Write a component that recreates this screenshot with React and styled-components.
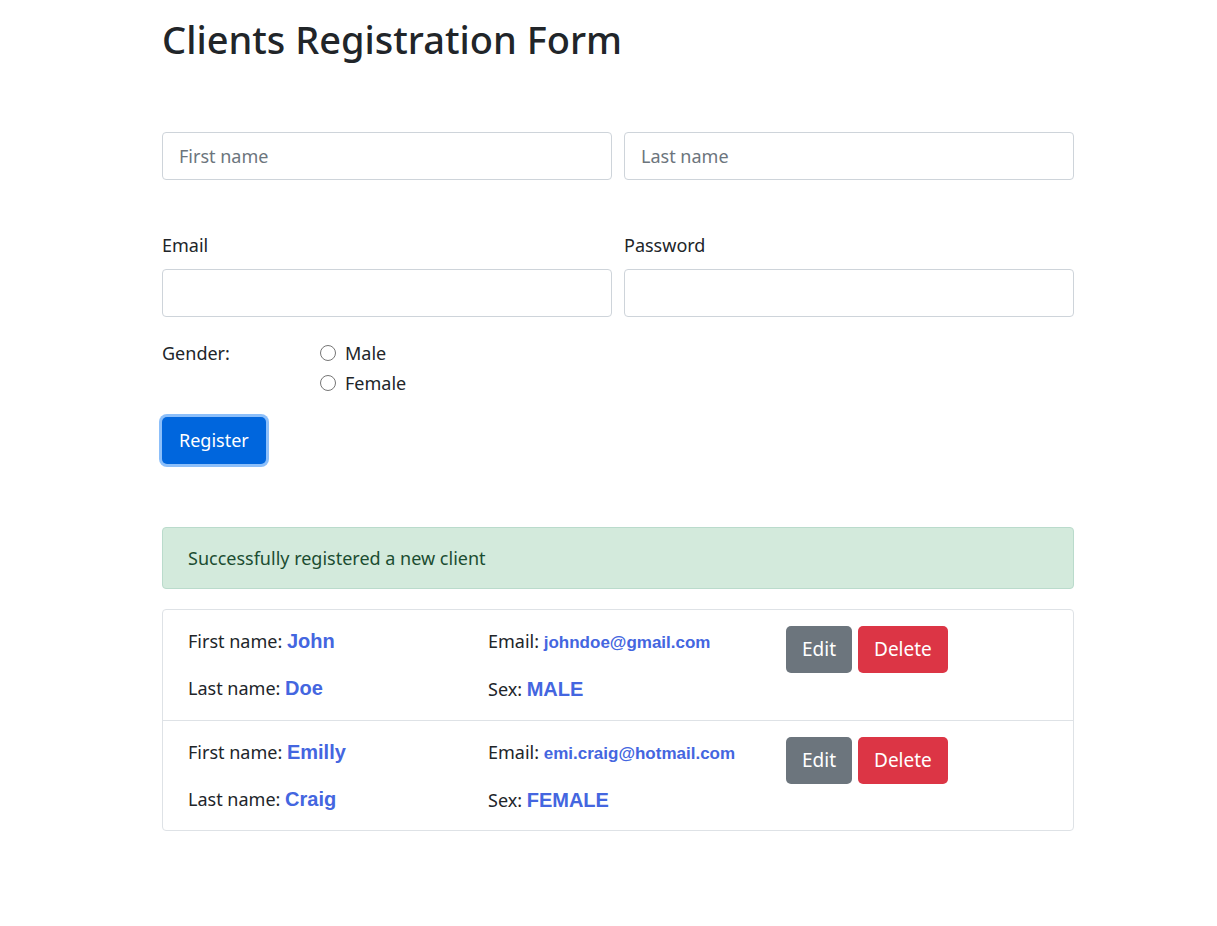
import React from 'react'
import styled, { createGlobalStyle } from 'styled-components'

const GlobalStyle = createGlobalStyle`
  body {
    margin: 0;
    background: #fff;
    color: #212529;
    font-family: "Noto Sans", "Open Sans", sans-serif;
    font-size: 18px;
  }
`

const Page = styled.div`
  width: 912px;
  margin-left: 162px;
  padding-top: 17px;
`

const Title = styled.h1`
  margin: 0 0 69px;
  font-size: 38px;
  font-weight: 500;
  line-height: 1.2;
`

const Row = styled.div`
  display: grid;
  grid-template-columns: 1fr 1fr;
  gap: 12px;
  margin-bottom: ${(p) => p.$mb || 0}px;
`

const Field = styled.div`
  display: flex;
  flex-direction: column;
`

const Label = styled.label`
  font-size: 18px;
  line-height: 24px;
  margin-bottom: 12px;
`

const Input = styled.input`
  box-sizing: border-box;
  height: 48px;
  padding: 0 16px;
  font-family: inherit;
  font-size: 18px;
  color: #212529;
  border: 1px solid #ced4da;
  border-radius: 4px;
  outline: none;

  &::placeholder {
    color: #6c757d;
  }
`

const GenderRow = styled.div`
  display: flex;
  margin-top: 21px;
`

const GenderLabel = styled.div`
  width: 158px;
  line-height: 30px;
`

const Radios = styled.div`
  display: flex;
  flex-direction: column;
`

const RadioLabel = styled.label`
  display: flex;
  align-items: center;
  gap: 9px;
  line-height: 30px;
`

const Radio = styled.input`
  appearance: none;
  width: 16px;
  height: 16px;
  margin: 0;
  border: 1px solid #767676;
  border-radius: 50%;
  background: #fff;
`

const Button = styled.button`
  height: 47px;
  padding: 0 16px;
  font-family: inherit;
  font-size: 19px;
  color: #fff;
  border: none;
  border-radius: 5px;
  background: ${(p) => p.$bg};
  cursor: pointer;
`

const RegisterButton = styled(Button)`
  margin-top: 19px;
  font-size: 18px;
  padding: 0 17px;
  box-shadow: 0 0 0 3px #8cbffa;
`

const Alert = styled.div`
  margin-top: 63px;
  padding: 0 25px;
  height: 60px;
  display: flex;
  align-items: center;
  background: #d3eadc;
  border: 1px solid #badbcc;
  border-radius: 4px;
  color: #1b4d31;
  font-size: 18px;
`

const List = styled.div`
  margin-top: 20px;
  border: 1px solid #dee2e6;
  border-radius: 4px;
`

const Item = styled.div`
  display: grid;
  grid-template-columns: 300px 298px auto;
  padding: 16px 25px 0;
  height: 110px;
  box-sizing: border-box;

  & + & {
    border-top: 1px solid #dee2e6;
  }
`

const Col = styled.div`
  display: flex;
  flex-direction: column;
  gap: 16px;
`

const Line = styled.div`
  line-height: 31px;
  white-space: nowrap;
`

const Value = styled.span`
  font-family: "Liberation Sans", Arial, sans-serif;
  font-weight: 700;
  font-size: ${(p) => p.$size || 20}px;
  color: #4466e0;
`

const Actions = styled.div`
  display: flex;
  gap: 6px;
  align-items: flex-start;
`

const clients = [
  { first: 'John', last: 'Doe', email: 'johndoe@gmail.com', sex: 'MALE' },
  { first: 'Emilly', last: 'Craig', email: 'emi.craig@hotmail.com', sex: 'FEMALE' },
]

const App = () => {
  return (
    <Page>
      <GlobalStyle />
      <Title>Clients Registration Form</Title>
      <Row $mb={53}>
        <Input placeholder="First name" />
        <Input placeholder="Last name" />
      </Row>
      <Row>
        <Field>
          <Label>Email</Label>
          <Input type="email" />
        </Field>
        <Field>
          <Label>Password</Label>
          <Input type="password" />
        </Field>
      </Row>
      <GenderRow>
        <GenderLabel>Gender:</GenderLabel>
        <Radios>
          <RadioLabel>
            <Radio type="radio" name="gender" />
            Male
          </RadioLabel>
          <RadioLabel>
            <Radio type="radio" name="gender" />
            Female
          </RadioLabel>
        </Radios>
      </GenderRow>
      <RegisterButton $bg="#0066dd">Register</RegisterButton>
      <Alert>Successfully registered a new client</Alert>
      <List>
        {clients.map((c) => (
          <Item key={c.email}>
            <Col>
              <Line>
                First name: <Value>{c.first}</Value>
              </Line>
              <Line>
                Last name: <Value>{c.last}</Value>
              </Line>
            </Col>
            <Col>
              <Line>
                Email: <Value $size={17}>{c.email}</Value>
              </Line>
              <Line>
                Sex: <Value>{c.sex}</Value>
              </Line>
            </Col>
            <Actions>
              <Button $bg="#6c757d">Edit</Button>
              <Button $bg="#dc3545">Delete</Button>
            </Actions>
          </Item>
        ))}
      </List>
    </Page>
  )
}

export default App
